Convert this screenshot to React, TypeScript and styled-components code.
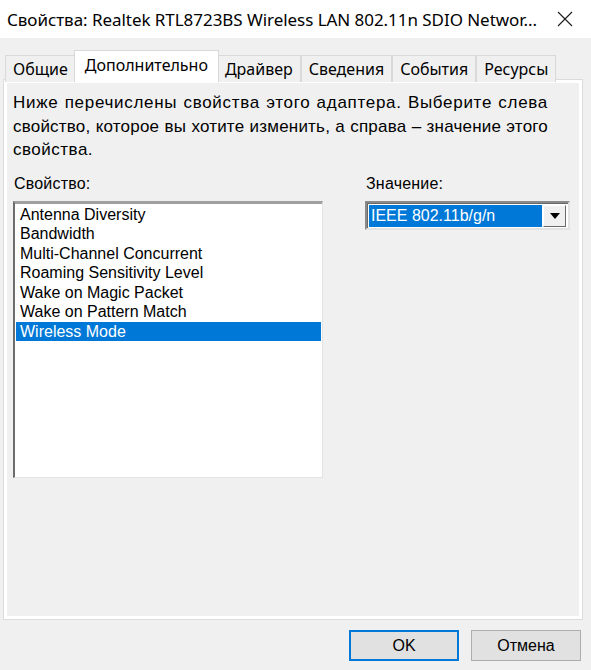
import React from "react";
import styled, { createGlobalStyle } from "styled-components";

const GlobalStyle = createGlobalStyle`
  html, body {
    margin: 0;
    padding: 0;
    background: #f0f0f0;
  }
  * {
    box-sizing: border-box;
  }
`;

const tabs = ["Общие", "Дополнительно", "Драйвер", "Сведения", "События", "Ресурсы"];

const properties = [
  "Antenna Diversity",
  "Bandwidth",
  "Multi-Channel Concurrent",
  "Roaming Sensitivity Level",
  "Wake on Magic Packet",
  "Wake on Pattern Match",
  "Wireless Mode",
];

export default function App() {
  return (
    <Dialog>
      <GlobalStyle />
      <TitleBar>
        <Title>Свойства: Realtek RTL8723BS Wireless LAN 802.11n SDIO Networ...</Title>
        <CloseButton>
          <svg width="16" height="16" viewBox="0 0 16 16">
            <path d="M1 1 L15 15 M15 1 L1 15" stroke="#1a1a1a" strokeWidth="1.1" fill="none" />
          </svg>
        </CloseButton>
      </TitleBar>

      <Content>
        <TabRow>
          {tabs.map((t, i) => (
            <Tab key={t} active={i === 1}>
              {t}
            </Tab>
          ))}
        </TabRow>

        <Panel>
          <Description>
            <DescLine fill spacing={0.7}>
              Ниже перечислены свойства этого адаптера. Выберите слева
            </DescLine>
            <DescLine fill spacing={0.2}>
              свойство, которое вы хотите изменить, а справа – значение этого
            </DescLine>
            <DescLine spacing={0.5}>свойства.</DescLine>
          </Description>

          <Columns>
            <LeftColumn>
              <Label>Свойство:</Label>
              <ListBox>
                {properties.map((p, i) => (
                  <ListItem key={p} selected={i === properties.length - 1}>
                    {p}
                  </ListItem>
                ))}
              </ListBox>
            </LeftColumn>

            <RightColumn>
              <Label>Значение:</Label>
              <Combo>
                <ComboValue>IEEE 802.11b/g/n</ComboValue>
                <ComboButton>
                  <svg width="10" height="6" viewBox="0 0 10 6">
                    <path d="M0 0 L10 0 L5 6 Z" fill="#000" />
                  </svg>
                </ComboButton>
              </Combo>
            </RightColumn>
          </Columns>
        </Panel>

        <Footer>
          <Button primary>OK</Button>
          <Button>Отмена</Button>
        </Footer>
      </Content>
    </Dialog>
  );
}

const Dialog = styled.div`
  width: 591px;
  height: 670px;
  background: #f0f0f0;
  display: flex;
  flex-direction: column;
  overflow: hidden;
`;

const TitleBar = styled.div`
  height: 38px;
  background: #ffffff;
  display: flex;
  align-items: center;
  justify-content: space-between;
  padding: 0 17px 0 7px;
`;

const Title = styled.div`
  font-family: "Noto Sans", "Open Sans", sans-serif;
  font-size: 17px;
  color: #000;
  white-space: nowrap;
  letter-spacing: -0.05px;
`;

const CloseButton = styled.div`
  display: flex;
  align-items: center;
  justify-content: center;
  width: 18px;
  height: 18px;
`;

const Content = styled.div`
  flex: 1;
  display: flex;
  flex-direction: column;
  padding: 14px 9px 0 4px;
`;

const TabRow = styled.div`
  display: flex;
  align-items: flex-end;
  padding-left: 1px;
  height: 30px;
  position: relative;
  z-index: 1;
  margin-bottom: -2px;
`;

const Tab = styled.div<{ active?: boolean }>`
  font-family: "Noto Sans", "Open Sans", sans-serif;
  font-size: 16px;
  color: #000;
  white-space: nowrap;
  display: flex;
  align-items: center;
  justify-content: center;
  border: 1px solid #d9d9d9;
  border-bottom: none;
  background: ${(p) => (p.active ? "#ffffff" : "#f0f0f0")};
  height: ${(p) => (p.active ? "32px" : "27px")};
  padding: ${(p) => (p.active ? "0 10px 3px" : "0 7px 0")};
  margin: ${(p) => (p.active ? "0 -2px" : "0")};
  position: relative;
  z-index: ${(p) => (p.active ? 2 : 1)};
  & + & {
    border-left: ${(p) => (p.active ? "1px solid #d9d9d9" : "none")};
  }
`;

const Panel = styled.div`
  height: 539px;
  border: 3px solid #ffffff;
  box-shadow: 0 0 0 1px #dcdcdc;
  background: #f0f0f0;
  padding: 8px 7px 0 6px;
  display: flex;
  flex-direction: column;
`;

const Description = styled.div`
  font-family: "Liberation Sans", Arial, sans-serif;
  font-size: 17px;
  line-height: 23.5px;
  color: #000;
  width: 535px;
`;

const DescLine = styled.div<{ fill?: boolean; spacing: number }>`
  letter-spacing: ${(p) => p.spacing}px;
  text-align: ${(p) => (p.fill ? "justify" : "left")};
  text-align-last: ${(p) => (p.fill ? "justify" : "left")};
`;

const Columns = styled.div`
  display: flex;
  margin-top: 12px;
`;

const LeftColumn = styled.div`
  display: flex;
  flex-direction: column;
  width: 310px;
`;

const RightColumn = styled.div`
  display: flex;
  flex-direction: column;
  margin-left: 42px;
  width: 205px;
`;

const Label = styled.div`
  font-family: "Liberation Sans", Arial, sans-serif;
  font-size: 16px;
  letter-spacing: 0.2px;
  line-height: 20px;
  color: #000;
  margin-bottom: 7px;
  padding-left: 1px;
`;

const ListBox = styled.div`
  height: 277px;
  background: #ffffff;
  border-style: solid;
  border-width: 2px 1px 1px 2px;
  border-color: #a0a0a0 #e3e3e3 #e3e3e3 #6d6d6d;
  box-shadow: inset 0 1px 0 #a0a0a0;
  padding: 2px 1px 0 1px;
  display: flex;
  flex-direction: column;
`;

const ListItem = styled.div<{ selected?: boolean }>`
  font-family: "Liberation Sans", Arial, sans-serif;
  font-size: 16px;
  line-height: 19.5px;
  padding-left: 4px;
  white-space: nowrap;
  color: ${(p) => (p.selected ? "#ffffff" : "#000000")};
  background: ${(p) => (p.selected ? "#0078d7" : "transparent")};
`;

const Combo = styled.div`
  height: 29px;
  display: flex;
  align-items: stretch;
  background: #ffffff;
  border-style: solid;
  border-width: 2px;
  border-color: #8a8a8a #e3e3e3 #e3e3e3 #8a8a8a;
  box-shadow: inset 1px 1px 0 #696969;
  padding: 2px 2px 1px 2px;
`;

const ComboValue = styled.div`
  flex: 1;
  background: #0078d7;
  color: #ffffff;
  font-family: "Liberation Sans", Arial, sans-serif;
  font-size: 16px;
  line-height: 22px;
  padding-left: 2px;
  white-space: nowrap;
`;

const ComboButton = styled.div`
  width: 23px;
  margin-left: 1px;
  background: #f0f0f0;
  border-style: solid;
  border-width: 1px;
  border-color: #ffffff #696969 #696969 #ffffff;
  display: flex;
  align-items: center;
  justify-content: center;
`;

const Footer = styled.div`
  display: flex;
  justify-content: flex-end;
  gap: 12px;
  padding: 11px 1px 0 0;
`;

const Button = styled.div<{ primary?: boolean }>`
  width: 110px;
  height: 31px;
  display: flex;
  align-items: center;
  justify-content: center;
  background: #e1e1e1;
  border: ${(p) => (p.primary ? "2px solid #0078d7" : "1px solid #adadad")};
  font-family: "Liberation Sans", Arial, sans-serif;
  font-size: 16px;
  color: #000;
`;
